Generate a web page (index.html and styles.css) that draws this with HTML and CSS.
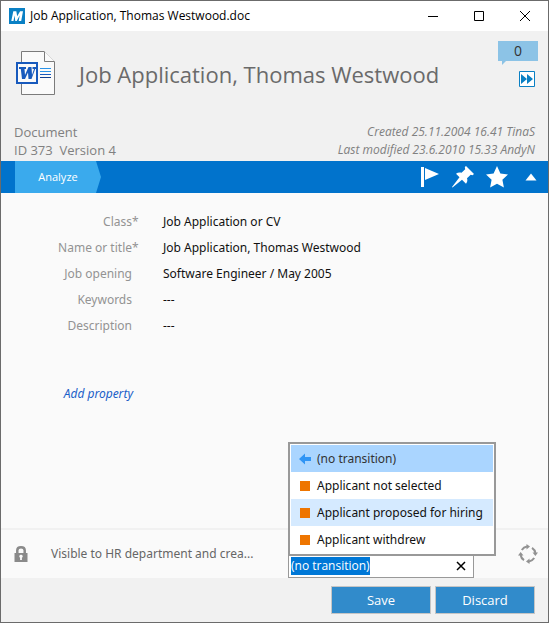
FILE: index.html
```html
<!DOCTYPE html>
<html lang="en">
<head>
<meta charset="utf-8">
<title>Job Application, Thomas Westwood.doc</title>
<link rel="stylesheet" href="styles.css">
</head>
<body>
<div class="window">
  <header class="titlebar">
    <svg class="logo" viewBox="0 0 16 16" aria-hidden="true"><path fill="#0a80c4" d="M0 0h16v16H0z"/><path fill="#fff" d="M2.300 13 4.300 3.300h3l.9 5 2.900-5H14L12.200 13H9.700l1-5.500L7.700 13H6.300L5.500 7.500 4.500 13z"/></svg>
    <span class="titlebar-text">Job Application, Thomas Westwood.doc</span>
    <div class="window-buttons">
      <button type="button" aria-label="Minimize"><svg viewBox="0 0 10 10"><path d="M0 5.500h10"/></svg></button>
      <button type="button" aria-label="Maximize"><svg viewBox="0 0 10 10"><path d="M.5.5h9v9h-9z"/></svg></button>
      <button type="button" aria-label="Close"><svg viewBox="0 0 10 10"><path d="m0 0 10 10M10 0 0 10"/></svg></button>
    </div>
  </header>

  <section class="summary">
    <div class="summary-top">
      <svg class="doc-icon" viewBox="0 0 40 46" aria-hidden="true">
        <path fill="#fafafa" stroke="#7b7b7b" d="M5.500.500H28L38.500 11v32.500h-33z"/>
        <path fill="#fafafa" stroke="#7b7b7b" d="M28.500.500v10h10"/>
        <path fill="#185abd" d="M0 11h22v22H0z"/>
        <path fill="#fafafa" d="M2 13h18v18H2z"/>
        <path fill="#185abd" d="M3 16h7v2H8.500l.5 6 3.500-8h3l.5 8 2-6h-1.500v-2H20v2h-.8L15.500 28h-3l-.5-6.500L9 28H6L4.800 18H3z"/>
        <path stroke="#2b93e8" d="M24 17.500h11M24 20.500h11"/><path stroke="#185abd" d="M24 23.500h11"/><path stroke="#103f91" d="M24 26.500h11"/>
      </svg>
      <h1>Job Application, Thomas Westwood</h1>
      <div class="summary-side">
        <button type="button" class="comments" aria-label="Comments">0</button>
        <button type="button" class="expand" aria-label="Show more"><svg viewBox="0 0 16 16"><path fill="#fff" stroke="#0a80c4" d="M.5.5h15v15H.5z"/><path fill="#0a80c4" d="m2 3 6 5-6 5zM8 3l6 5-6 5z"/></svg></button>
      </div>
    </div>
    <div class="summary-meta">
      <div class="ident">Document<br>ID 373&nbsp; Version 4</div>
      <div class="history">Created 25.11.2004 16.41 TinaS<br>Last modified 23.6.2010 15.33 AndyN</div>
    </div>
  </section>

  <nav class="actions">
    <button type="button" class="tab">Analyze</button>
    <div class="action-icons">
      <button type="button" aria-label="Follow"><svg viewBox="0 0 22 22"><path d="M3 1h3v20H3zM7 2l14 6-14 6z"/></svg></button>
      <button type="button" aria-label="Pin"><svg viewBox="0 0 22 22"><path d="m14 0 8 8-1.500 1.200-1.800-.4-3.700 3.400c.8 2.300.2 4-1 5.500l-4-4L.5 21.500 0 21l7.500-9.800L4 7.800c1.700-1.300 3.500-1.600 5.500-1l3.700-3.600L12.800 1z"/></svg></button>
      <button type="button" aria-label="Favorite"><svg viewBox="0 0 22 22"><path d="m11 0 3.400 7.500 7.600.9-5.600 5.300 1.500 7.800L11 17.700l-6.900 3.800 1.500-7.800L0 8.400l7.600-.9z"/></svg></button>
      <button type="button" aria-label="Collapse"><svg viewBox="0 0 22 22"><path d="m5.500 14.500 5.500-7 5.500 7z"/></svg></button>
    </div>
  </nav>

  <main class="card">
    <dl class="properties">
      <dt>Class<span class="mark">*</span></dt><dd>Job Application or CV</dd>
      <dt>Name or title<span class="mark">*</span></dt><dd>Job Application, Thomas Westwood</dd>
      <dt>Job opening<span class="mark"></span></dt><dd>Software Engineer / May 2005</dd>
      <dt>Keywords<span class="mark"></span></dt><dd>---</dd>
      <dt>Description<span class="mark"></span></dt><dd>---</dd>
    </dl>
    <a class="add-property" href="#add">Add property</a>
  </main>

  <section class="status">
    <svg class="lock" viewBox="0 0 14 16" aria-hidden="true"><path fill="none" stroke="#8a8a8a" stroke-width="2.500" d="M3.300 8V4.300C3.300 2.200 4.500 1.300 7 1.300s3.700.9 3.700 3V8"/><path fill="#8a8a8a" d="M.5 7h13v9H.5z"/><path fill="#fafafa" d="M7 8.800a1.600 1.600 0 0 1 .9 3V14H6.100v-2.200a1.600 1.600 0 0 1 .9-3z"/></svg>
    <span class="visibility">Visible to HR department and crea...</span>
    <div class="combo">
      <ul class="menu" id="transitions" role="listbox" aria-label="Transitions">
        <li class="option current" role="option" aria-selected="true"><svg viewBox="0 0 12 12"><path fill="#3095f5" d="M0 6l6-5.500V4h6v4H6v3.500z"/></svg>(no transition)</li>
        <li class="option" role="option"><span class="state"></span>Applicant not selected</li>
        <li class="option hovered" role="option"><span class="state"></span>Applicant proposed for hiring</li>
        <li class="option" role="option"><span class="state"></span>Applicant withdrew</li>
      </ul>
      <input class="combo-input" type="text" role="combobox" aria-label="Workflow transition" aria-controls="transitions" aria-expanded="true" value="(no transition)">
      <button type="button" class="clear" aria-label="Clear"><svg viewBox="0 0 10 10"><path fill="none" stroke="#000" stroke-width="1.500" d="m1 1 8 8M9 1 1 9"/></svg></button>
    </div>
    <svg class="workflow" viewBox="0 0 20 20" aria-hidden="true">
      <g id="arc"><path fill="none" stroke="#929292" stroke-width="2" d="M3.800 6A7.500 7.500 0 0 1 9 2.600"/><path fill="#929292" d="M8.500 0v5.500L12 2.600z"/></g>
      <use href="#arc" transform="rotate(90 10 10)"/><use href="#arc" transform="rotate(180 10 10)"/><use href="#arc" transform="rotate(270 10 10)"/>
    </svg>
  </section>

  <footer class="footer">
    <button type="button" class="command">Save</button>
    <button type="button" class="command">Discard</button>
  </footer>
</div>
<script src="script.js"></script>
</body>
</html>
```
FILE: styles.css
```css
* { box-sizing: border-box; }

body {
  margin: 0;
  font: 12px/18px "Open Sans", "Noto Sans", sans-serif;
  color: #111;
}

button {
  margin: 0;
  padding: 0;
  border: 0;
  background: none;
  font: inherit;
  color: inherit;
}

svg { display: block; flex: none; }

.window {
  display: flex;
  flex-direction: column;
  min-height: 100vh;
  border: 1px solid #6b6b6b;
  background: #f1f1f1;
}

.titlebar {
  display: flex;
  align-items: center;
  height: 30px;
  padding-left: 8px;
  background: #fff;
  color: #000;
}

.logo { width: 16px; height: 16px; }
.titlebar-text { flex: 1; margin-left: 5px; }
.window-buttons { display: flex; }

.window-buttons button {
  display: grid;
  place-items: center;
  width: 46px;
  height: 30px;
}

.window-buttons svg {
  width: 10px;
  height: 10px;
  overflow: visible;
  fill: none;
  stroke: #000;
}

.summary {
  display: flex;
  flex-direction: column;
  justify-content: space-between;
  height: 130px;
  padding: 10px 10px 2px 13px;
}

.summary-top { display: flex; }
.doc-icon { width: 40px; height: 46px; margin: 10px 0 0 2px; }

h1 {
  flex: 1;
  margin: 17px 0 0 23px;
  font-size: 22px;
  line-height: 32px;
  font-weight: 400;
  color: #6a6a6a;
  white-space: nowrap;
}

.summary-side {
  display: flex;
  flex-direction: column;
  align-items: flex-end;
  gap: 10px;
}

.comments {
  position: relative;
  width: 40px;
  height: 20px;
  background: #8cc3e6;
  font-size: 14px;
  color: #333;
}

.comments::after {
  content: "";
  position: absolute;
  left: 4px;
  top: 100%;
  border-top: 4px solid #8cc3e6;
  border-right: 4px solid transparent;
}

.expand { margin-right: 3px; }
.expand svg { width: 16px; height: 16px; }

.summary-meta {
  display: flex;
  justify-content: space-between;
  padding-right: 3px;
  color: #808080;
}

.ident { font-size: 13px; }
.history { font-style: italic; text-align: right; }

.actions {
  display: flex;
  justify-content: space-between;
  height: 32px;
  padding: 0 6px 0 14px;
  background: #0173cc;
}

.tab {
  width: 86px;
  background: #3aaaed;
  clip-path: polygon(0 0, 81px 0, 100% 50%, 81px 100%, 0 100%);
  font-size: 11px;
  font-weight: 500;
  color: #fff;
}

.action-icons { display: flex; align-items: center; gap: 12px; }
.action-icons svg { width: 22px; height: 22px; fill: #fff; }

.card {
  flex: 1;
  padding: 16px;
  background: #fafafa;
}

.card,
.visibility,
.menu { font-family: "Noto Sans", "Open Sans", sans-serif; }

.properties {
  display: grid;
  grid-template-columns: 121px 1fr;
  column-gap: 25px;
  margin: 0;
  line-height: 26px;
}

.properties dt { text-align: right; color: #939393; }
.properties dd { margin: 0; }
.mark { display: inline-block; width: 6px; }

.add-property {
  display: block;
  width: 116px;
  margin-top: 46px;
  font-style: italic;
  text-align: right;
  text-decoration: none;
  color: #1a5fc8;
}

.status {
  display: flex;
  align-items: center;
  height: 50px;
  padding: 0 10px 0 13px;
  border-top: 2px solid #f1f1f1;
  background: #fafafa;
}

.lock { width: 14px; height: 16px; }
.visibility { flex: 1; margin-left: 23px; color: #666; }

.combo {
  position: relative;
  align-self: flex-end;
  display: flex;
  align-items: center;
  width: 186px;
  height: 25px;
  padding: 0 7px 0 2px;
  border: 1px solid #999;
  background: #fff;
}

.combo-input {
  flex: 1;
  min-width: 0;
  padding: 0;
  border: 0;
  outline: 0;
  background: none;
  font: inherit;
  color: #000;
}

.combo-input::selection { background: #0078d7; color: #fff; }
.clear svg { width: 10px; height: 10px; }

.menu {
  position: absolute;
  left: -1px;
  bottom: 21px;
  width: 208px;
  margin: 0;
  padding: 1px;
  border: 2px solid #999;
  background: #fff;
  list-style: none;
}

.option {
  display: flex;
  align-items: center;
  gap: 6px;
  height: 27px;
  padding-left: 8px;
  white-space: nowrap;
}

.option svg { width: 12px; height: 12px; }
.state { width: 10px; height: 10px; margin: 0 1px; background: #ee7500; }
.current { background: #aad5ff; color: #333; }
.hovered { background: #d5eaff; }

.workflow { width: 20px; height: 20px; margin-left: 44px; }

.footer {
  display: flex;
  justify-content: flex-end;
  gap: 4px;
  height: 44px;
  padding: 8px 13px;
}

.command {
  width: 100px;
  height: 28px;
  border: 1px solid #c5c5c5;
  background: #318bcb;
  font-size: 13px;
  color: #fff;
}
```
FILE: script.js
```js
const input = document.querySelector(".combo-input");
input.focus();
input.select();
```
